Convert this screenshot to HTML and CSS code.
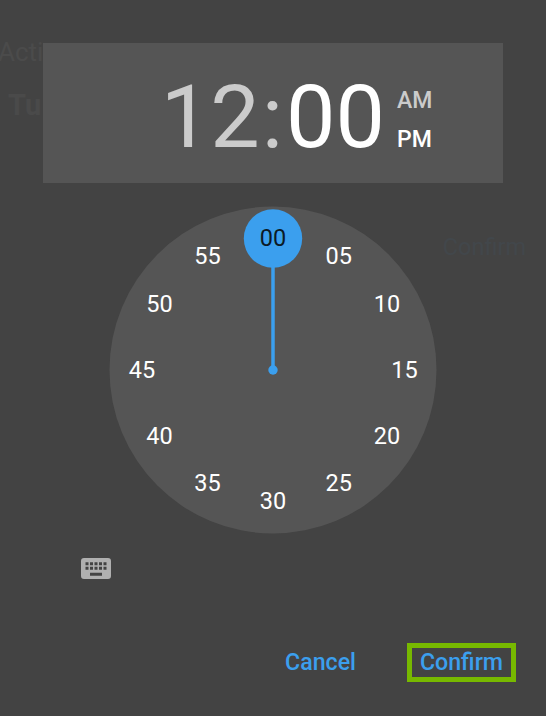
FILE: index.html
```html
<!DOCTYPE html>
<html lang="en">
<head>
  <meta charset="UTF-8">
  <meta name="viewport" content="width=device-width, initial-scale=1.0">
  <title>Set time</title>
  <link rel="stylesheet" href="styles.css">
</head>
<body>
  <!-- Dimmed page behind the dialog -->
  <div class="backdrop" aria-hidden="true">
    <div class="backdrop-label">Acti</div>
    <div class="backdrop-day">Tu</div>
    <div class="backdrop-confirm">Confirm</div>
  </div>

  <div class="picker">
    <div class="header">
      <div class="time"><span>12</span><span class="colon">:</span><span class="active">00</span></div>
      <div class="ampm">
        <span>AM</span>
        <span class="active">PM</span>
      </div>
    </div>

    <!-- Minute dial -->
    <svg class="dial" viewBox="0 0 328 328">
      <circle class="face" cx="164" cy="164" r="163.5"/>
      <line class="hand" x1="164" y1="60" x2="164" y2="164"/>
      <circle class="knob" cx="164" cy="164" r="4.7"/>
      <circle class="knob" cx="164" cy="32.5" r="29.2"/>
      <text class="selected" x="164" y="40.3">00</text>
      <text x="229.8" y="58">05</text>
      <text x="277.9" y="106">10</text>
      <text x="295.5" y="172">15</text>
      <text x="277.9" y="237.6">20</text>
      <text x="229.8" y="285.3">25</text>
      <text x="164" y="303">30</text>
      <text x="98.5" y="285.3">35</text>
      <text x="50.4" y="237.6">40</text>
      <text x="32.9" y="172">45</text>
      <text x="50.4" y="106">50</text>
      <text x="98.5" y="58">55</text>
    </svg>

    <!-- Keyboard input toggle -->
    <svg class="keyboard" viewBox="0 0 30 21">
      <path fill-rule="evenodd" d="M3 0h24a3 3 0 0 1 3 3v15a3 3 0 0 1-3 3H3a3 3 0 0 1-3-3V3a3 3 0 0 1 3-3zM4.5 4.2v3h3v-3zM9 4.2v3h3v-3zM13.5 4.2v3h3v-3zM18 4.2v3h3v-3zM22.5 4.2v3h3v-3zM4.5 8.7v3h3v-3zM9 8.7v3h3v-3zM13.5 8.7v3h3v-3zM18 8.7v3h3v-3zM22.5 8.7v3h3v-3zM9 14.7v3h12v-3z"/>
    </svg>

    <div class="buttons">
      <button>Cancel</button>
      <button class="highlight">Confirm</button>
    </div>
  </div>
</body>
</html>
```

FILE: styles.css
```css
body {
  margin: 0;
  background-color: #434343;
  color: white;
  font-family: Roboto, sans-serif;
  height: 716px;
  overflow: hidden;
}

.backdrop {
  position: absolute;
  top: 0;
  left: 0;
  width: 546px;
  height: 716px;
  overflow: hidden;
}

.backdrop-label {
  margin: 37px 0 0 -2px;
  font-size: 26px;
  line-height: 30px;
  color: #4b4b4b;
}

.backdrop-day {
  margin: 21px 0 0 8px;
  font-size: 29px;
  font-weight: 700;
  line-height: 34px;
  color: #4a4a4a;
}

.backdrop-confirm {
  margin: 111px 20px 0 0;
  text-align: right;
  font-size: 23.5px;
  line-height: 28px;
  color: #42474b;
}

.picker {
  position: relative;
  display: flex;
  flex-direction: column;
  padding-top: 43px;
}

.header {
  display: flex;
  width: 460px;
  height: 140px;
  margin-left: 43px;
  background-color: #555555;
  color: #cbcbcb;
}

.header .active {
  color: white;
}

.time {
  width: 342px;
  padding-top: 22px;
  text-align: right;
  font-size: 88px;
  line-height: 104px;
}

.colon {
  margin: 0 3px 0 2px;
}

.ampm {
  display: flex;
  flex-direction: column;
  padding: 38px 0 0 12px;
  font-size: 23px;
  font-weight: 500;
  line-height: 39px;
}

.dial {
  width: 328px;
  height: 328px;
  margin: 23px 0 0 109px;
  font-size: 23.5px;
  text-anchor: middle;
  fill: white;
}

.face {
  fill: #555555;
}

.hand {
  stroke: #3b9fee;
  stroke-width: 3.5;
}

.knob {
  fill: #3b9fee;
}

.selected {
  fill: #0b1a26;
}

.keyboard {
  width: 30px;
  height: 21px;
  margin: 24px 0 0 80.5px;
  fill: #b0b0b0;
}

.buttons {
  display: flex;
  justify-content: flex-end;
  gap: 46px;
  padding: 64px 30px 0 0;
}

.buttons button {
  box-sizing: border-box;
  height: 39px;
  padding: 0;
  background: none;
  border: 5px solid transparent;
  color: #3b9fee;
  font-family: inherit;
  font-size: 23.2px;
  font-weight: 500;
  line-height: 29px;
}

.buttons .highlight {
  width: 109px;
  border-color: #77b900;
}
```
